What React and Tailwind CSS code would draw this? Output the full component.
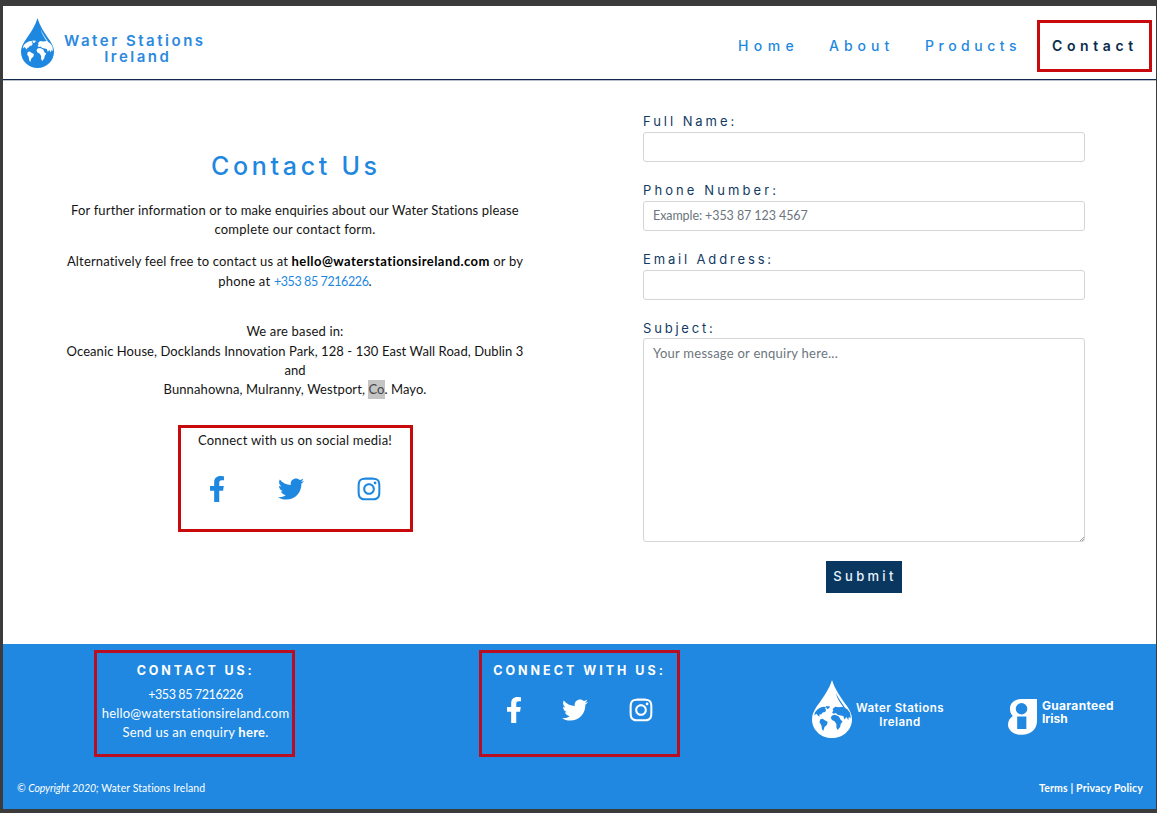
import { FaFacebookF, FaTwitter, FaInstagram } from "react-icons/fa";

const INTER = "font-['Inter',sans-serif]";

function DropLogo({ className, water, land }) {
  return (
    <svg viewBox="0 0 64 100" preserveAspectRatio="none" className={className} aria-hidden="true">
      <path
        fill={water.drop}
        d="M32 0C28 15 17 32 8 45C3 53 0 60 0 67.500C0 86 14.500 100 32 100C49.500 100 64 86 64 67.500C64 60 61 53 56 45C47 32 36 15 32 0Z"
      />
      <path fill={water.glint} d="M38 22C42 32 49 41 54 50L51 48C46 41 40 32 38 22Z" />
      <g fill={land}>
        <path d="M5 55C9 49 15 46 20 46L23 48L20 50L23 51L21 55L17 56L15 59L11 60L13 63L10 62L7 58L3.500 61Z" />
        <path d="M22 45L29 45.500L27 49L24 50Z" />
        <path d="M13 68L17 67L21 70L25 72L24 77L20 81L18 88L16 85L15 78L12 73Z" />
        <path d="M32 56L34 53L33 50L37 46L43 47L50 46L57 51L61 57L62 66L59 64L58 69L55 64L52 68L50 62L46 61L41 60L38 57L35 58Z" />
        <path d="M32 61L37 60L43 63L46 69L49 71L46 76L45 81L41 86L39 82L39 76L36 71L32 69L30 65Z" />
      </g>
    </svg>
  );
}

function GuaranteedIrishMark() {
  return (
    <svg viewBox="0 0 30 38" className="h-[37px] w-[29px] shrink-0" aria-hidden="true">
      <path
        fill="#fff"
        fillRule="evenodd"
        d="M14 1H30V24C30 32 23.500 38 14.500 38C6.500 38 0 33.500 0 27.500C0 23.500 2 20.500 5 18.500C3 16.500 2 14 2 11C2 5 7 1 14 1ZM14 5A6 6 0 1 0 14 17A6 6 0 1 0 14 5ZM9.500 19V32H19V19Z"
      />
    </svg>
  );
}

function Field({ label, labelClass, placeholder, inputClass = "" }) {
  return (
    <label className="mb-[18.900px] flex h-[50px] flex-col">
      <span className={`${INTER} h-[20px] text-[13px] leading-[19px] text-[#123a63] ${labelClass}`}>{label}</span>
      <input
        type="text"
        placeholder={placeholder}
        className={`h-[30px] w-full rounded-[3px] border border-[#d3d5d8] bg-white px-[9px] placeholder:text-[#6c757d] ${inputClass}`}
      />
    </label>
  );
}

function Header() {
  return (
    <header className="flex h-[74px] items-center justify-between border-b border-[#10294d] pl-[18px] shadow-[0_1px_0_#b9c0cc]">
      <div className="flex items-center">
        <DropLogo className="mt-[1px] h-[50px] w-[33px]" water={{ drop: "#1e88e0", glint: "#d3e8fa" }} land="#fff" />
        <div className={`${INTER} mt-[12px] ml-[10px] flex w-[139px] flex-col items-center text-[15px] leading-[16px] font-semibold whitespace-nowrap text-[#2b8ade]`}>
          <span className="-mr-[2.6px] tracking-[2.52px]">Water Stations</span>
          <span className="-mr-[2.6px] ml-[6px] tracking-[2.5px]">Ireland</span>
        </div>
      </div>
      <nav className={`${INTER} flex h-full items-center pr-[4px] text-[14px] font-medium whitespace-nowrap text-[#1e88e0]`}>
        <a className="mt-[6px] w-[91px] tracking-[5.4px]">Home</a>
        <a className="mt-[6px] w-[96px] tracking-[5px]">About</a>
        <a className="mt-[6px] w-[112px] tracking-[4.5px]">Products</a>
        <a className="mt-[7px] flex h-[52px] w-[115px] items-center border-3 border-[#c90a0c] pb-[2px] pl-[12px] font-semibold tracking-[4.6px] text-[#0b2b4c]">
          Contact
        </a>
      </nav>
    </header>
  );
}

function ContactInfo() {
  return (
    <section className="flex w-[584px] flex-col items-center pt-[67px] text-[13px] leading-[19.2px] whitespace-nowrap text-[#141414]">
      <h1 className={`${INTER} -mr-[1.700px] mb-[14px] h-[40px] text-[25px] leading-[39px] font-medium tracking-[3.7px] text-[#1e88e0]`}>
        Contact Us
      </h1>
      <p className="tracking-[0.15px]">For further information or to make enquiries about our Water Stations please</p>
      <p className="mb-[13px] tracking-[0.25px]">complete our contact form.</p>
      <p className="tracking-[0.16px]">
        Alternatively feel free to contact us at{" "}
        <strong className="tracking-[0.43px] text-black">hello@waterstationsireland.com</strong> or by
      </p>
      <p className="mb-[31.500px] tracking-[0.22px]">
        phone at <a className="text-[12.5px] tracking-[-0.4px] text-[#1e88e0]">+353 85 7216226</a>.
      </p>
      <p className="tracking-[0.16px]">We are based in:</p>
      <p className="tracking-[0.075px]">Oceanic House, Docklands Innovation Park, 128 - 130 East Wall Road, Dublin 3</p>
      <p>and</p>
      <p className="mb-[26px] tracking-[0.06px]">
        <span className="tracking-[0.11px]">Bunnahowna, Mulranny, Westport, </span>
        <span className="inline-block h-[19px] bg-[#c4c4c4] text-[#444]">Co</span>. Mayo.
      </p>
      <div className="flex h-[107px] w-[235px] flex-col items-center border-3 border-[#c90a0c] pt-[3px]">
        <p className="tracking-[0.22px]">Connect with us on social media!</p>
        <div className="mt-[26px] grid h-[26px] w-[229px] grid-cols-[73px_74px_83px] items-center text-[#1e88e0]">
          <FaFacebookF className="h-[26px] w-[20px] justify-self-center" />
          <FaTwitter className="size-[26px] justify-self-center" />
          <FaInstagram className="size-[26px] justify-self-center" />
        </div>
      </div>
    </section>
  );
}

function ContactForm() {
  return (
    <form className="ml-[56px] flex w-[442px] flex-col pt-[32px]">
      <Field label="Full Name:" labelClass="tracking-[2.95px]" />
      <Field
        label="Phone Number:"
        labelClass="tracking-[3.1px]"
        placeholder="Example: +353 87 123 4567"
        inputClass="text-[12.5px] tracking-[-0.08px]"
      />
      <Field label="Email Address:" labelClass="tracking-[2.85px]" />
      <label className="flex flex-col">
        <span className={`${INTER} -mt-px h-[20px] text-[13px] leading-[21px] tracking-[2.8px] text-[#123a63]`}>Subject:</span>
        <span className="relative flex">
          <textarea
            placeholder="Your message or enquiry here..."
            className="h-[204px] w-full resize-none rounded-[3px] border border-[#d3d5d8] bg-white px-[9px] py-[5px] text-[13px] leading-[18px] tracking-[0.25px] placeholder:text-[#6c757d]"
          />
          <svg viewBox="0 0 4 4" className="absolute right-[1px] bottom-[1px] size-[4px]" aria-hidden="true">
            <path d="M0 4L4 0M2 4L4 2" stroke="#777" strokeWidth="0.700" />
          </svg>
        </span>
      </label>
      <button type="button" className={`${INTER} mt-[19px] h-[32px] w-[76px] self-center bg-[#0a3760] pl-[2px] text-[13px] font-medium tracking-[3.3px] text-[#e8f4ff]`}>
        Submit
      </button>
    </form>
  );
}

function Footer() {
  return (
    <footer className="flex h-[165px] flex-col bg-[#2088e0] text-[13px] leading-[19.2px] whitespace-nowrap text-white">
      <div className="flex h-[130px] pt-[6px]">
        <div className="ml-[91px] flex h-[107px] w-[201px] flex-col items-center border-3 border-[#b90d22] pt-[8px]">
          <h2 className={`${INTER} -mr-[2.300px] mb-[4.500px] text-[12.5px] leading-[19px] font-bold tracking-[2.85px]`}>CONTACT US:</h2>
          <p className="ml-[2px] text-[12.5px] tracking-[-0.4px]">+353 85 7216226</p>
          <p className="ml-[2px] tracking-[0.2px]">hello@waterstationsireland.com</p>
          <p className="ml-[2px] tracking-[0.25px]">
            Send us an enquiry <strong>here</strong>.
          </p>
        </div>
        <div className="ml-[184px] flex h-[107px] w-[201px] flex-col items-center border-3 border-[#b90d22] pt-[8px]">
          <h2 className={`${INTER} mb-[17px] text-[12.5px] leading-[19px] font-bold tracking-[3px]`}>CONNECT WITH US:</h2>
          <div className="grid h-[26px] w-[195px] grid-cols-[63px_60px_71px] items-center">
            <FaFacebookF className="h-[26px] w-[20px] justify-self-center" />
            <FaTwitter className="size-[26px] justify-self-center" />
            <FaInstagram className="size-[26px] justify-self-center" />
          </div>
        </div>
        <div className="mt-[30px] ml-[132px] flex items-start">
          <DropLogo className="h-[58px] w-[40px]" water={{ drop: "#fff", glint: "#2088e0" }} land="#2088e0" />
          <div className={`${INTER} mt-[21px] ml-[4px] flex w-[88px] flex-col items-center text-[11.5px] leading-[14px] font-semibold`}>
            <span className="tracking-[0.47px]">Water Stations</span>
            <span className="tracking-[0.48px]">Ireland</span>
          </div>
        </div>
        <div className="mt-[48px] ml-[64px] flex items-start">
          <GuaranteedIrishMark />
          <div className={`${INTER} mt-px ml-[5px] flex flex-col text-[12px] leading-[13px] font-bold`}>
            <span className="tracking-[0.3px]">Guaranteed</span>
            <span>Irish</span>
          </div>
        </div>
      </div>
      <div className="flex items-center justify-between pt-[5px] pr-[13px] pl-[14px] text-[10.5px]">
        <p>
          <span className="tracking-[-0.12px]">
            © <em>Copyright 2020;</em>
          </span>{" "}
          <span className="tracking-[0.08px]">Water Stations Ireland</span>
        </p>
        <p className="font-bold tracking-[0.15px]">Terms | Privacy Policy</p>
      </div>
    </footer>
  );
}

export default function App() {
  return (
    <div className="h-[813px] w-[1157px] overflow-hidden bg-[#3b3b3b] pt-[6px] pr-[1px] pl-[3px] font-['Lato',sans-serif]">
      <div className="h-[803px] bg-white">
        <Header />
        <main className="flex h-[564px]">
          <ContactInfo />
          <ContactForm />
        </main>
        <Footer />
      </div>
    </div>
  );
}
